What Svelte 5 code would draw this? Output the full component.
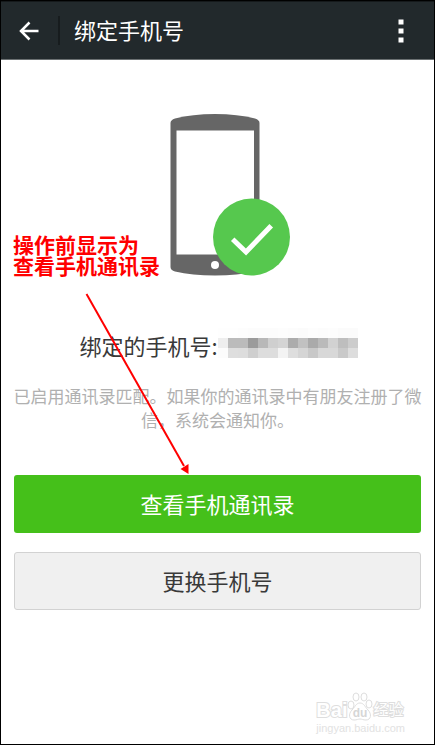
<script>
  const title = "绑定手机号";

  // grey levels of the masked phone number, one array per row
  const mask = [
    [254, 254, 253, 252, 252, 252, 253, 252, 251, 253, 252, 253, 251, 251],
    [238, 187, 187, 155, 184, 207, 212, 172, 193, 170, 186, 210, 190, 204],
    [252, 222, 221, 207, 221, 221, 243, 222, 213, 200, 216, 216, 201, 221]
  ];

  function goBack() {
    history.back();
  }
</script>

<div class="screen">
  <header class="bar">
    <button class="icon back" aria-label="返回" on:click={goBack}>
      <svg width="20" height="20" viewBox="0 0 20 20">
        <path d="M10.5 1.5 L2 10 L10.5 18.5 M2 10 H19.5" />
      </svg>
    </button>
    <h1>{title}</h1>
    <button class="icon more" aria-label="更多">
      <svg width="6" height="24" viewBox="0 0 6 24">
        <rect x="0.5" y="0.5" width="5" height="5" />
        <rect x="0.5" y="9.5" width="5" height="5" />
        <rect x="0.5" y="18.5" width="5" height="5" />
      </svg>
    </button>
  </header>

  <main>
    <svg class="phone" width="151" height="163" viewBox="0 0 151 163">
      <path
        fill="#666"
        d="M28.500 9 Q28.500 6 33 4.500 Q50 0 73 0 Q96 0 113 4.500 Q117.500 6 117.500 9 V153 Q117.500 156 113 157.500 Q96 161.500 73 161.500 Q50 161.500 33 157.500 Q28.500 156 28.500 153 Z" />
      <rect x="34.500" y="16.500" width="77.500" height="124" fill="#fff" />
      <circle cx="73" cy="151" r="4" fill="#fff" />
      <circle cx="109.500" cy="123" r="38.500" fill="#56c84e" />
      <path
        d="M92.500 127 L104 138 L127.500 113.500"
        fill="none"
        stroke="#fff"
        stroke-width="5"
        stroke-linecap="square"
        stroke-linejoin="miter" />
    </svg>

    <div class="number">
      <span>绑定的手机号:</span>
      <svg width="140" height="30" viewBox="0 0 140 30" shape-rendering="crispEdges">
        {#each mask as row, y}
          {#each row as level, x}
            <rect
              x={x * 10}
              y={y * 10}
              width="10"
              height="10"
              fill="rgb({level},{level},{level})" />
          {/each}
        {/each}
      </svg>
    </div>

    <p class="hint">已启用通讯录匹配。如果你的通讯录中有朋友注册了微信，系统会通知你。</p>

    <div class="actions">
      <button class="primary">查看手机通讯录</button>
      <button class="plain">更换手机号</button>
    </div>
  </main>

  <div class="note">
    <div>操作前显示为</div>
    <div>查看手机通讯录</div>
  </div>
  <svg class="arrow" width="108" height="184" viewBox="0 0 108 184">
    <path d="M3.500 3 L101 175" stroke="#f00" stroke-width="2" />
    <path d="M105.500 183 L97.500 178 L105.500 173 Z" fill="#f00" />
  </svg>

  <div class="watermark">
    <div class="brand">
      <span class="latin">Bai</span>
      <svg width="26" height="30" viewBox="0 0 26 30">
        <ellipse cx="4" cy="13" rx="3" ry="4" />
        <ellipse cx="9" cy="5" rx="3" ry="4" />
        <ellipse cx="17" cy="5" rx="3" ry="4" />
        <ellipse cx="22" cy="12" rx="3" ry="4" />
        <path d="M13 11 C17 11 18 15 21 18 C25 22 24 28 19 28 C16 28 15 27 13 27 C11 27 10 28 7 28 C2 28 1 22 5 18 C8 15 9 11 13 11 Z" />
        <text x="13" y="25" text-anchor="middle">du</text>
      </svg>
      <span class="han">经验</span>
    </div>
    <div class="site">jingyan.baidu.com</div>
  </div>
</div>

<style>
  :global(body) {
    margin: 0;
    background: #fff;
  }
  .screen {
    position: relative;
    box-sizing: border-box;
    min-height: 100vh;
    border: 1px solid #000;
    background: #fff;
    color: #393939;
    font-family: "Noto Sans CJK SC", "Noto Sans", sans-serif;
  }
  button {
    margin: 0;
    padding: 0;
    border: 0;
    font-family: inherit;
    cursor: pointer;
  }
  .bar {
    display: flex;
    align-items: center;
    box-sizing: border-box;
    height: 59px;
    border-top: 1px solid #15191b;
    border-bottom: 1px solid #6b7072;
    background: #22292c;
  }
  .icon {
    display: flex;
    align-items: center;
    justify-content: center;
    background: none;
  }
  .back {
    width: 59px;
    height: 29px;
    padding-right: 1px;
    border-right: 2px solid #171c1e;
  }
  .back path {
    fill: none;
    stroke: #fff;
    stroke-width: 2.5;
  }
  .more {
    width: 66px;
    height: 48px;
    fill: #fff;
  }
  h1 {
    flex: 1;
    margin: 0;
    padding: 0 0 4px 14px;
    color: #fff;
    font-size: 22px;
    font-weight: 400;
    line-height: 30px;
  }
  main {
    padding: 54px 13px 40px;
  }
  .phone {
    display: block;
    margin: 0 auto;
  }
  .number {
    display: flex;
    align-items: flex-start;
    justify-content: center;
    margin-top: 51px;
    padding-left: 2px;
    font-size: 22px;
    line-height: 34px;
  }
  .hint {
    margin: 22px -2px 0;
    color: #b0b0b0;
    font-size: 17px;
    line-height: 24px;
    text-align: center;
  }
  .actions {
    display: grid;
    gap: 19px;
    margin-top: 43px;
  }
  .actions button {
    box-sizing: border-box;
    height: 58px;
    padding-bottom: 3px;
    border-radius: 3px;
    font-size: 22px;
  }
  .primary {
    background: #45c01a;
    color: #fff;
  }
  .actions .plain {
    border: 1px solid #d2d2d2;
    background: #f0f0f0;
    color: #393939;
  }
  .note {
    position: absolute;
    top: 233px;
    left: 12px;
    color: #f00;
    font-size: 21px;
    font-weight: 700;
    line-height: 21px;
    white-space: nowrap;
  }
  .arrow {
    position: absolute;
    top: 290px;
    left: 82px;
    fill: none;
    pointer-events: none;
  }
  .watermark {
    position: absolute;
    right: 29px;
    bottom: 10px;
    color: #fff;
    font-family: "Liberation Sans", "Noto Sans CJK SC", sans-serif;
  }
  .brand {
    display: flex;
    align-items: flex-end;
    line-height: 24px;
  }
  .brand span {
    -webkit-text-stroke: 2px #dedede;
    paint-order: stroke fill;
  }
  .brand svg {
    fill: #fff;
    stroke: #dedede;
  }
  .brand text {
    font-size: 12px;
    font-weight: 700;
    stroke: none;
    fill: #d6d6d6;
  }
  .latin {
    font-size: 20px;
    font-weight: 700;
  }
  .han {
    font-size: 15px;
  }
  .site {
    color: #e2e2e2;
    font-size: 11px;
    line-height: 12px;
  }
</style>
